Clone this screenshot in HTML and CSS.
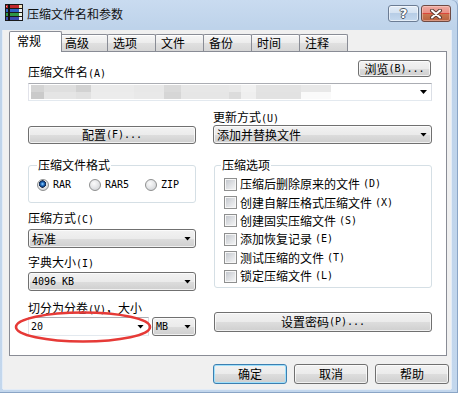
FILE: index.html
```html
<!DOCTYPE html>
<html lang="zh-CN">
<head>
<meta charset="utf-8">
<title>压缩文件名和参数</title>
<link rel="stylesheet" href="styles.css">
</head>
<body>
<div class="window">
  <header class="titlebar">
    <svg class="appicon" width="19" height="17" viewBox="0 0 19 17">
      <rect x="0.5" y="0.5" width="17" height="4" fill="#c0262c" stroke="#1a1a1a"/>
      <rect x="0.5" y="4.5" width="17" height="4" fill="#2e62c4" stroke="#1a1a1a"/>
      <rect x="0.5" y="8.5" width="17" height="4" fill="#2f9646" stroke="#1a1a1a"/>
      <rect x="0.5" y="12.5" width="17" height="4" fill="#3b4cae" stroke="#1a1a1a"/>
      <rect x="14" y="1" width="3" height="3" fill="#f3e3bf"/>
      <rect x="14" y="5" width="3" height="3" fill="#e8eef8"/>
      <rect x="14" y="9" width="3" height="3" fill="#eaf3e6"/>
      <rect x="14" y="13" width="3" height="3" fill="#e6e9f6"/>
      <rect x="3" y="0" width="2" height="17" fill="#111"/>
      <rect x="1" y="2" width="1" height="1" fill="#f7a0a0"/>
    </svg>
    <span class="title">压缩文件名和参数</span>
    <div class="caption">
      <div class="cap-btn help"><span>?</span></div>
      <div class="cap-btn close">
        <svg width="14" height="10" viewBox="0 0 14 10">
          <path d="M3 1.5 L11 8.5 M11 1.5 L3 8.5" stroke="#5b3b33" stroke-width="4" stroke-linecap="round"/>
          <path d="M3 1.5 L11 8.5 M11 1.5 L3 8.5" stroke="#ffffff" stroke-width="2" stroke-linecap="round"/>
        </svg>
      </div>
    </div>
  </header>

  <div class="client">
    <nav class="tabs">
      <div class="tab active">常规</div>
      <div class="tab">高级</div>
      <div class="tab">选项</div>
      <div class="tab">文件</div>
      <div class="tab">备份</div>
      <div class="tab">时间</div>
      <div class="tab">注释</div>
    </nav>

    <section class="panel">
      <div class="row-top">
        <span class="label lbl-archive">压缩文件名<span class="en">(A)</span></span>
        <button class="btn browse">浏览<span class="en">(B)...</span></button>
      </div>
      <div class="combo-edit filename"><div class="blur"></div><i class="arrow"></i></div>

      <div class="cols row-a">
        <button class="btn config">配置<span class="en">(F)...</span></button>
        <div class="stack">
          <span class="label">更新方式<span class="en">(U)</span></span>
          <div class="dd update"><span>添加并替换文件</span><i class="arrow"></i></div>
        </div>
      </div>

      <div class="cols row-b">
        <div class="left">
          <fieldset class="group fmt">
            <legend>压缩文件格式</legend>
            <div class="radios">
              <label class="opt"><i class="rd on"></i><span class="en">RAR</span></label>
              <label class="opt"><i class="rd"></i><span class="en">RAR5</span></label>
              <label class="opt"><i class="rd"></i><span class="en">ZIP</span></label>
            </div>
          </fieldset>
          <div class="label l-method">压缩方式<span class="en">(C)</span></div>
          <div class="dd c-method"><span>标准</span><i class="arrow"></i></div>
          <div class="label l-dict">字典大小<span class="en">(I)</span></div>
          <div class="dd c-dict"><span class="en">4096 KB</span><i class="arrow"></i></div>
          <div class="label l-split">切分为分卷<span class="en">(V)</span>，大小</div>
          <div class="split">
            <div class="combo-edit vol"><span class="en">20</span><i class="arrow"></i></div>
            <div class="dd unit"><span class="en">MB</span><i class="arrow"></i></div>
            <svg class="mark" width="140" height="36" viewBox="0 0 140 36">
              <ellipse cx="69" cy="18" rx="67" ry="14.5" fill="none" stroke="#e63a37" stroke-width="2.6"/>
            </svg>
          </div>
        </div>

        <div class="right">
          <fieldset class="group opts">
            <legend>压缩选项</legend>
            <label class="chk"><i class="cb"></i>压缩后删除原来的文件<span class="en">(D)</span></label>
            <label class="chk"><i class="cb"></i>创建自解压格式压缩文件<span class="en">(X)</span></label>
            <label class="chk"><i class="cb"></i>创建固实压缩文件<span class="en">(S)</span></label>
            <label class="chk"><i class="cb"></i>添加恢复记录<span class="en">(E)</span></label>
            <label class="chk"><i class="cb"></i>测试压缩的文件<span class="en">(T)</span></label>
            <label class="chk"><i class="cb"></i>锁定压缩文件<span class="en">(L)</span></label>
          </fieldset>
          <button class="btn pwd">设置密码<span class="en">(P)...</span></button>
        </div>
      </div>
    </section>

    <footer class="footer">
      <button class="btn action default">确定</button>
      <button class="btn action">取消</button>
      <button class="btn action">帮助</button>
    </footer>
  </div>
</div>
</body>
</html>
```

FILE: styles.css
```css
* { box-sizing: border-box; }

html, body { margin: 0; padding: 0; }

body {
  width: 458px;
  height: 393px;
  overflow: hidden;
  font-family: "Noto Sans CJK SC", "Noto Sans", sans-serif;
  font-size: 12px;
  line-height: 12px;
  color: #000;
  background: #c4d7ed;
}

.en {
  font-family: "DejaVu Sans Mono", "Liberation Mono", monospace;
  font-size: 10px;
  line-height: 10px;
}

/* ---------- window frame ---------- */
.window {
  width: 458px;
  height: 393px;
  display: flex;
  flex-direction: column;
  padding: 0 7px 4px 3px;
  background: linear-gradient(#c9dbf0 0, #bed3ea 28px, #c3d7ed 100%);
  box-shadow: inset -1px 0 0 #8aa5c6, inset 0 -1px 0 #8aa5c6;
  border-top-right-radius: 6px;
}

.titlebar {
  height: 30px;
  flex: none;
  display: flex;
  align-items: flex-start;
}

.appicon { margin: 4px 0 0 2px; flex: none; }

.title {
  margin: 7px 0 0 3px;
  line-height: 14px;
  color: #111;
}

.caption {
  margin-left: auto;
  margin-top: 5px;
  display: flex;
  gap: 2px;
}

.cap-btn {
  height: 17px;
  border: 1px solid #6b7c94;
  border-radius: 3px;
  display: flex;
  align-items: center;
  justify-content: center;
}

.cap-btn.help {
  width: 31px;
  background: linear-gradient(#e3ecf7 0, #d3e1f1 50%, #b7cde6 50%, #c4d8ee 100%);
  box-shadow: inset 0 0 0 1px rgba(255,255,255,.55);
}

.cap-btn.help span {
  font-family: "DejaVu Sans", sans-serif;
  font-weight: bold;
  font-size: 13px;
  line-height: 13px;
  color: #fff;
  text-shadow: 1px 0 #4d5866, -1px 0 #4d5866, 0 1px #4d5866, 0 -1px #4d5866;
}

.cap-btn.close {
  width: 30px;
  border-color: #6e4a44;
  background: linear-gradient(#eeaaa2 0, #e88e84 48%, #d9473a 48%, #d9473a 56%, #c9764f 56%, #b95f3e 100%);
  box-shadow: inset 0 0 0 1px rgba(255,220,210,.45);
}

/* ---------- client ---------- */
.client {
  flex: 1;
  background: #f0f0f0;
  padding: 1px 0 0 6px;
  box-shadow: -1px 0 0 #e3ecf7, 1px 0 0 #e3ecf7, 0 1px 0 #e3ecf7;
}

.tabs {
  display: flex;
  align-items: flex-end;
  height: 20px;
  position: relative;
  z-index: 1;
}

.tab {
  width: 49px;
  height: 17px;
  margin-left: -1px;
  padding-left: 5px;
  border: 1px solid #898c95;
  border-bottom: none;
  border-radius: 2px 2px 0 0;
  background: linear-gradient(#f6f6f6 0, #ececec 50%, #e0e0e0 51%, #d6d6d6 100%);
  box-shadow: inset 0 1px 0 #fff;
  line-height: 16px;
  white-space: nowrap;
}

.tab.active {
  width: 53px;
  height: 21px;
  margin-left: 0;
  margin-right: -2px;
  margin-bottom: -1px;
  padding-left: 7px;
  background: #fff;
  box-shadow: none;
  line-height: 18px;
  position: relative;
  z-index: 2;
}

.panel {
  width: 438px;
  height: 305px;
  border: 1px solid #898c95;
  background: #fff;
  padding: 8px 14px 0 18px;
}

.label { line-height: 12px; white-space: nowrap; display: block; }

.row-top {
  display: flex;
  justify-content: space-between;
  align-items: flex-end;
  height: 17px;
}

.row-top .lbl-archive { margin-bottom: -2px; }

/* ---------- buttons ---------- */
.btn {
  font: inherit;
  color: #000;
  margin: 0;
  padding: 0;
  border: 1px solid #707070;
  border-radius: 3px;
  background: linear-gradient(#f2f2f2 0, #ebebeb 50%, #dddddd 51%, #cfcfcf 100%);
  box-shadow: inset 0 0 0 1px rgba(255,255,255,.7);
  display: flex;
  align-items: center;
  justify-content: center;
  line-height: 12px;
  white-space: nowrap;
}

.browse { width: 73px; height: 17px; margin-right: 1px; }
.config { height: 18px; }
.pwd { width: 218px; height: 20px; margin-top: 24px; }

.footer {
  display: flex;
  justify-content: flex-end;
  gap: 7px;
  margin-top: 8px;
  margin-right: 2px;
}

.action { width: 74px; height: 20px; }

.action.default {
  border-color: #3c7fb1;
  box-shadow: inset 0 0 0 1px #9fe0fb;
}

/* ---------- combo boxes ---------- */
.arrow {
  display: block;
  flex: none;
  width: 7px;
  height: 4px;
  background: #000;
  clip-path: polygon(0 0, 100% 0, 50% 100%);
}

.dd {
  height: 19px;
  display: flex;
  align-items: center;
  justify-content: space-between;
  padding: 0 4px 0 3px;
  border: 1px solid #707070;
  border-radius: 3px;
  background: linear-gradient(#f2f2f2 0, #ebebeb 50%, #dddddd 51%, #cfcfcf 100%);
  box-shadow: inset 0 0 0 1px rgba(255,255,255,.7);
  white-space: nowrap;
}

.combo-edit {
  display: flex;
  align-items: center;
  justify-content: space-between;
  padding: 0 4px 0 2px;
  border: 1px solid;
  border-color: #abadb3 #dbdfe6 #e3e9ef #e2e3ea;
  background: #fff;
}

.filename { margin-top: 6px; height: 18px; }

.blur {
  width: 300px;
  height: 14px;
  background:
    linear-gradient(to right,
      #d4d4d4 0 13px, #dfdfdf 13px 45px, #d2d2d2 45px 60px, #ebebeb 60px 103px,
      #e8e8e8 103px 133px, #dadada 133px 150px, #e7e7e7 150px 198px,
      #e9e9e9 198px 210px, #f1f1f1 210px 225px, #e3e3e3 225px 270px, #e8e8e8 270px 300px)
      top / 100% 50% no-repeat,
    linear-gradient(to right,
      #cacaca 0 13px, #e5e5e5 13px 45px, #e1e1e1 45px 60px, #ececec 60px 103px,
      #e9e9e9 103px 133px, #d6d6d6 133px 150px, #e6e6e6 150px 198px,
      #dcdcdc 198px 210px, #efefef 210px 225px, #e2e2e2 225px 270px, #fafafa 270px 300px)
      bottom / 100% 50% no-repeat;
}

.cols {
  display: grid;
  grid-template-columns: 168px 218px;
  column-gap: 18px;
}

.row-a { margin-top: 10px; align-items: end; }

.stack { display: flex; flex-direction: column; margin-left: -1px; }
.update { margin-top: 1px; height: 19px; }

.row-b { margin-top: 14px; align-items: start; }

/* ---------- group boxes ---------- */
.group {
  margin: 0;
  min-width: 0;
  border: 1px solid #d5dfe5;
  border-radius: 3px;
}

.group legend {
  padding: 0 1px;
  line-height: 14px;
}

.fmt { padding: 6px 0 10px 8px; }

.radios {
  display: grid;
  grid-template-columns: 52px 56px auto;
  align-items: center;
  height: 14px;
}

.opt { display: flex; align-items: center; gap: 4px; }

.rd {
  display: block;
  width: 12px;
  height: 12px;
  border-radius: 50%;
  border: 1px solid #8e8f8f;
  background: radial-gradient(circle at 40% 35%, #fbfbfb 0, #e6e7e9 45%, #c9ccd0 100%);
}

.rd.on {
  background:
    radial-gradient(circle at 45% 40%, #a8dcff 0, #2f7fd2 1.4px, #0f3b78 2.8px, #1b2a44 3.5px, transparent 3.9px),
    radial-gradient(circle at 40% 35%, #fbfbfb 0, #e6e7e9 45%, #c9ccd0 100%);
}

.l-method { margin-top: 9px; }
.c-method { margin-top: 4px; }
.l-dict { margin-top: 8px; }
.c-dict { margin-top: 3px; }
.l-split { margin-top: 11px; }

.split {
  position: relative;
  display: flex;
  gap: 3px;
  margin-top: 2px;
  height: 19px;
}

.vol { width: 121px; }
.unit { width: 44px; height: 19px; }

.mark {
  position: absolute;
  left: -14px;
  top: -8px;
  pointer-events: none;
}

.opts { padding: 3px 0 2px 9px; }
.opts legend { margin-left: -3px; }

.chk {
  display: flex;
  align-items: center;
  gap: 3px;
  height: 18.4px;
  white-space: nowrap;
}

.cb {
  display: block;
  flex: none;
  width: 13px;
  height: 13px;
  padding: 1px;
  border: 1px solid #8e8f8f;
  background:
    linear-gradient(135deg, #c4c8ce 0, #dfe1e4 55%, #f2f3f4 100%) content-box,
    linear-gradient(#f6f6f6, #f6f6f6) padding-box;
}
```
